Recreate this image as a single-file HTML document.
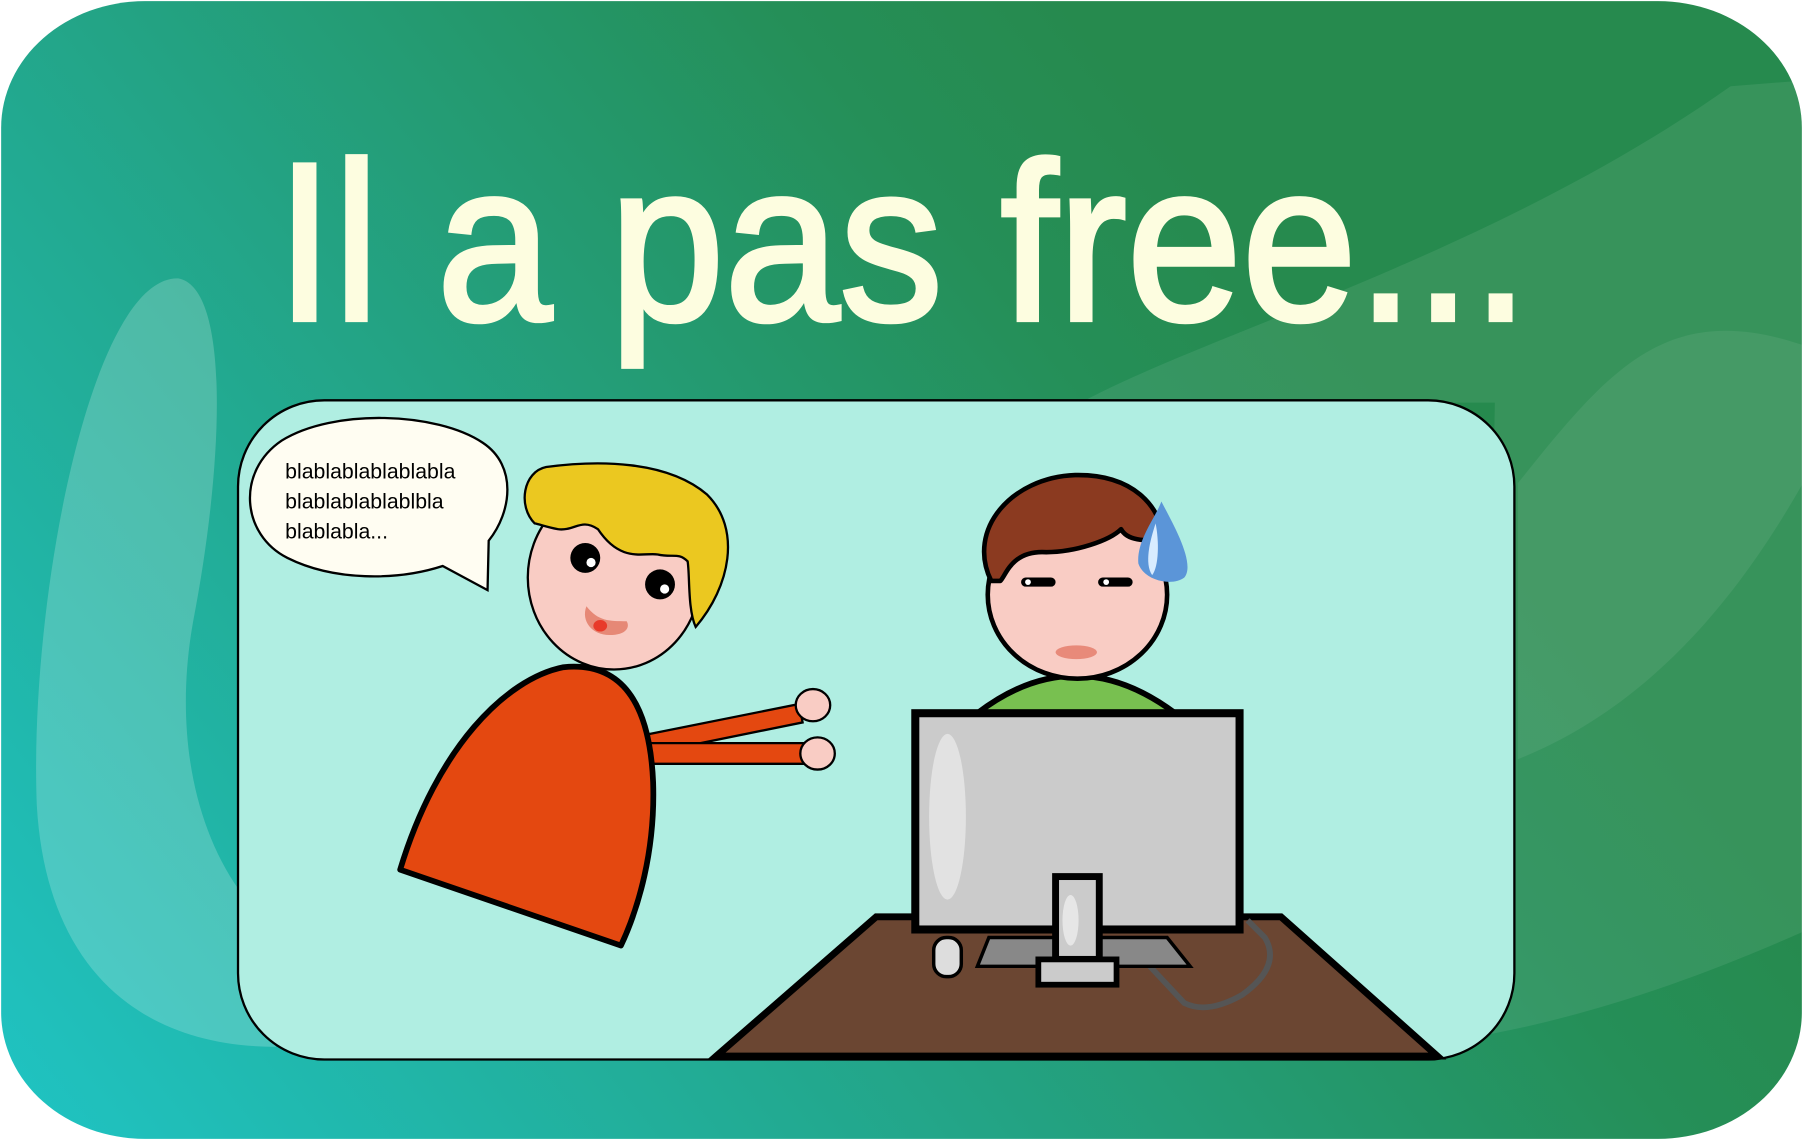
<!DOCTYPE html>
<html><head><meta charset="utf-8"><style>
html,body{margin:0;padding:0;width:1803px;height:1140px;overflow:hidden;background:#fff}
svg{display:block}
</style></head><body>
<svg width="1803" height="1140" viewBox="0 0 1568 991" preserveAspectRatio="none" xmlns="http://www.w3.org/2000/svg">
<defs>
<linearGradient id="bg" gradientUnits="userSpaceOnUse" x1="0" y1="991" x2="1050" y2="150">
<stop offset="0" stop-color="#1fc4c4"/>
<stop offset="0.5" stop-color="#23a486"/>
<stop offset="0.85" stop-color="#258f58"/>
<stop offset="1" stop-color="#268a4e"/>
</linearGradient>
<clipPath id="c"><rect x="1" y="1" width="1566" height="989" rx="125" ry="110"/></clipPath>
</defs>
<rect x="1" y="1" width="1566" height="989" rx="125" ry="110" fill="url(#bg)"/>
<g clip-path="url(#c)">
<path d="M155 242 C200 250 195 400 168 540 C150 640 170 740 230 800 L240 910 C120 910 40 840 32 700 C25 520 80 240 155 242Z" fill="#ffffff" opacity="0.2"/>
<path d="M940 350 C1050 290 1300 220 1505 75 L1568 70 L1568 810 C1500 840 1400 880 1290 900 L1300 350Z" fill="#ffffff" opacity="0.08"/>
<path d="M1320 420 C1400 320 1450 260 1568 300 L1568 420 C1500 540 1420 620 1320 660Z" fill="#ffffff" opacity="0.07"/>
</g>
<text x="240" y="278" font-family="Liberation Sans, sans-serif" font-size="196" fill="#fdfde0" stroke="#fdfde0" stroke-width="4" textLength="1090" lengthAdjust="spacingAndGlyphs">Il a pas free...</text>
<rect x="207" y="348" width="1110" height="573" rx="75" ry="75" fill="#b0eee2" stroke="#000" stroke-width="2"/>
<path d="M623 918 L762 797 L1114 797 L1250 918Z" fill="#6b4632" stroke="#000" stroke-width="6" stroke-linejoin="miter"/>
<path d="M1000 840 L1030 872 Q1050 882 1080 865 Q1115 840 1100 815 L1085 800" fill="none" stroke="#555" stroke-width="5"/>
<path d="M850 620 Q935 555 1022 620Z" fill="#78c050" stroke="#000" stroke-width="5"/>
<ellipse cx="937" cy="517" rx="78" ry="73" fill="#f9ccc4" stroke="#000" stroke-width="4"/>
<path d="M862 505 C840 460 880 415 935 413 C985 412 1010 440 1012 470 C995 470 980 470 975 460 C965 470 935 480 910 480 C880 478 875 500 870 505Z" fill="#8b3a20" stroke="#000" stroke-width="4" stroke-linejoin="round"/>
<path d="M1010 436 C1020 455 1040 490 1030 502 C1020 510 995 505 990 490 C988 470 1005 450 1010 436Z" fill="#5b95d8"/>
<path d="M1005 455 C1000 470 995 490 1002 500 C1008 492 1008 470 1005 455Z" fill="#d8ecff"/>
<rect x="888" y="502" width="30" height="8" rx="4" fill="#000"/>
<rect x="955" y="502" width="30" height="8" rx="4" fill="#000"/>
<circle cx="894" cy="506" r="2.5" fill="#fff"/><circle cx="962" cy="506" r="2.5" fill="#fff"/>
<ellipse cx="936" cy="567" rx="18" ry="6" fill="#e88a7a"/>
<path d="M860 815 L1015 815 L1035 840 L850 840Z" fill="#888" stroke="#000" stroke-width="3"/>
<rect x="796" y="620" width="282" height="188" fill="#cbcbcb" stroke="#000" stroke-width="7"/>
<ellipse cx="824" cy="710" rx="16" ry="72" fill="#e2e2e2"/>
<rect x="918" y="762" width="38" height="72" fill="#cbcbcb" stroke="#000" stroke-width="6"/>
<ellipse cx="931" cy="800" rx="7" ry="22" fill="#e6e6e6"/>
<rect x="903" y="834" width="68" height="22" fill="#cbcbcb" stroke="#000" stroke-width="5"/>
<rect x="812" y="815" width="24" height="34" rx="11" fill="#ddd" stroke="#000" stroke-width="3"/>
<path d="M555 640 L695 612 L698 628 L560 656Z" fill="#e44810" stroke="#000" stroke-width="2"/>
<path d="M560 646 L700 646 L700 664 L560 664Z" fill="#e44810" stroke="#000" stroke-width="2"/>
<ellipse cx="707" cy="613" rx="15" ry="14" fill="#f9ccc4" stroke="#000" stroke-width="2"/>
<ellipse cx="711" cy="655" rx="15" ry="14" fill="#f9ccc4" stroke="#000" stroke-width="2"/>
<path d="M348 756 C380 650 440 590 490 580 C540 575 565 610 568 680 C570 740 555 790 540 822Z" fill="#e44810" stroke="#000" stroke-width="5" stroke-linejoin="round"/>
<ellipse cx="534" cy="502" rx="75" ry="80" fill="#f9ccc4" stroke="#000" stroke-width="2"/>
<path d="M465 455 C450 440 455 410 475 406 C520 400 580 400 615 430 C645 460 635 510 605 545 C598 530 600 500 598 488 C590 480 585 485 572 482 C560 480 540 490 520 460 C505 450 500 462 485 460 C475 458 470 456 465 455Z" fill="#ebc820" stroke="#000" stroke-width="2"/>
<ellipse cx="509" cy="485" rx="13" ry="13" fill="#000"/><circle cx="514" cy="489" r="4" fill="#fff"/>
<ellipse cx="574" cy="508" rx="13" ry="13" fill="#000"/><circle cx="578" cy="512" r="4" fill="#fff"/>
<path d="M510 527 C505 540 515 552 530 552 C545 552 548 545 545 540 C530 540 520 540 510 527Z" fill="#e68876"/>
<ellipse cx="522" cy="544" rx="6" ry="5" fill="#e83a2a"/>
<path d="M385 492 C345 505 290 505 250 485 C210 465 205 410 245 383 C290 355 380 358 420 385 C450 405 445 445 425 470 L424 513Z" fill="#fffdf2" stroke="#000" stroke-width="2" stroke-linejoin="miter"/>
<g font-family="Liberation Sans, sans-serif" font-size="18.5" fill="#000">
<text x="248" y="416">blablablablablabla</text>
<text x="248" y="442">blablablablablbla</text>
<text x="248" y="468">blablabla...</text>
</g>
</svg>
</body></html>
